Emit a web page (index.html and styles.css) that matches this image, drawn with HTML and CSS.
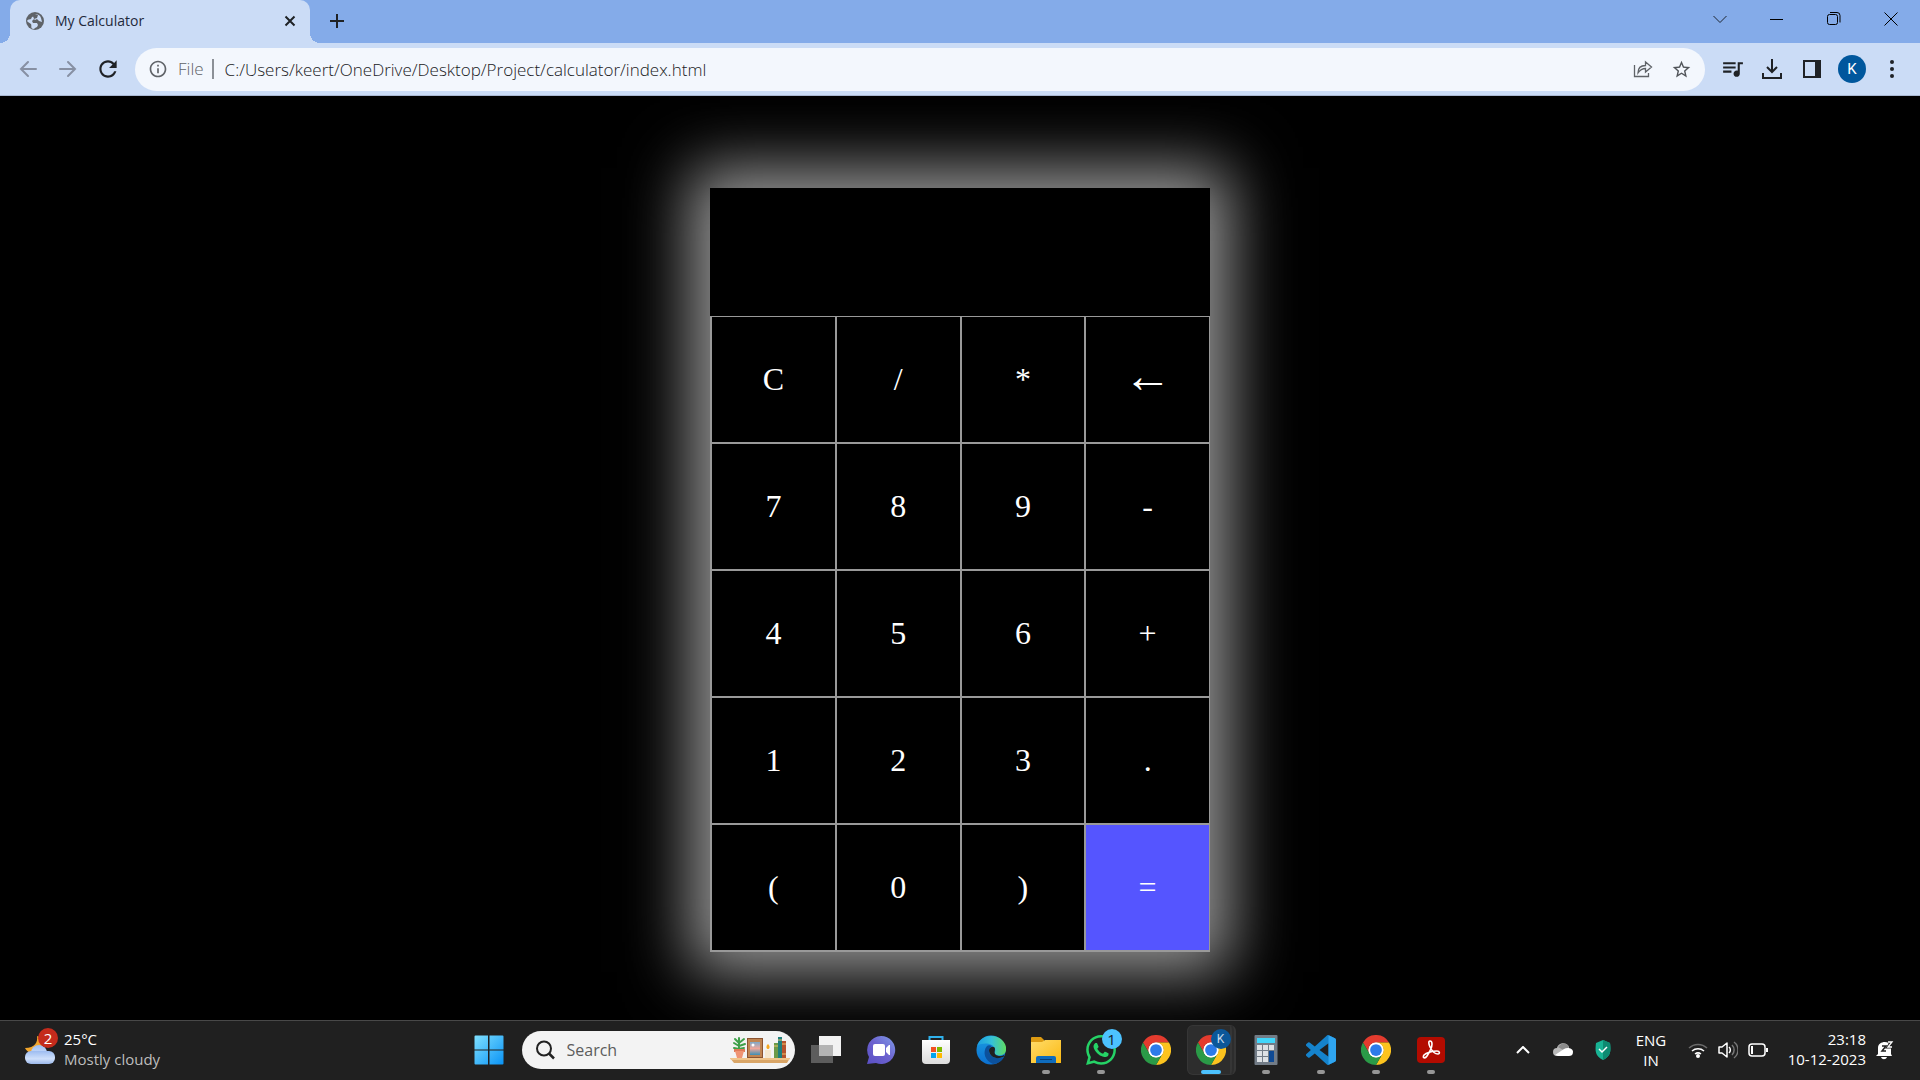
FILE: index.html
```html
<!DOCTYPE html>
<html lang="en">
<head>
<meta charset="utf-8">
<meta name="viewport" content="width=device-width, initial-scale=1">
<title>My Calculator</title>
<link rel="stylesheet" href="styles.css">
</head>
<body>
<svg class="defs" aria-hidden="true">
  <defs>
    <linearGradient id="win" x1="0" y1="0" x2="1" y2="1"><stop offset="0" stop-color="#7fe0ff"/><stop offset="1" stop-color="#0a93f5"/></linearGradient>
    <linearGradient id="chat" x1="1" y1="0" x2="0" y2="1"><stop offset="0" stop-color="#7f9be8"/><stop offset=".5" stop-color="#6c62cf"/><stop offset="1" stop-color="#5a4fc4"/></linearGradient>
    <linearGradient id="bag" x1="0" y1="0" x2="0" y2="1"><stop offset="0" stop-color="#fff"/><stop offset="1" stop-color="#dcdcdc"/></linearGradient>
    <linearGradient id="edgeTop" x1="0" y1="0" x2="1" y2="0"><stop offset="0" stop-color="#1b9de2"/><stop offset=".5" stop-color="#35c1d8"/><stop offset="1" stop-color="#5fdc62"/></linearGradient>
    <linearGradient id="edgeLeft" x1="0" y1="0" x2="0" y2="1"><stop offset="0" stop-color="#1b9de2"/><stop offset="1" stop-color="#0b6fd0"/></linearGradient>
    <linearGradient id="folder" x1="0" y1="0" x2="1" y2="1"><stop offset="0" stop-color="#ffdc6a"/><stop offset="1" stop-color="#fbb912"/></linearGradient>
    <linearGradient id="cloud" x1="0" y1="0" x2="0" y2="1"><stop offset="0" stop-color="#9dbcf0"/><stop offset=".6" stop-color="#cfe0fb"/><stop offset="1" stop-color="#9bb8ea"/></linearGradient>
    <linearGradient id="photo" x1="0" y1="0" x2="0" y2="1"><stop offset="0" stop-color="#7fa9c9"/><stop offset=".5" stop-color="#f0a79a"/><stop offset="1" stop-color="#3d8fb5"/></linearGradient>
    <symbol id="chrome" viewBox="0 0 48 48">
      <circle cx="24" cy="24" r="12.500" fill="#fff"/>
      <path fill="#e33b2e" d="M24 12H44.800A24 24 0 0 0 3.200 12L13.600 30A12 12 0 0 1 24 12Z"/>
      <path fill="#fcc31e" d="M44.800 12A24 24 0 0 1 24 48L34.400 30A12 12 0 0 0 24 12Z"/>
      <path fill="#2a9a47" d="M24 48A24 24 0 0 1 3.200 12L13.600 30A12 12 0 0 0 34.400 30Z"/>
      <circle cx="24" cy="24" r="12" fill="#fff"/>
      <circle cx="24" cy="24" r="9.400" fill="#2c7be9"/>
    </symbol>
  </defs>
</svg>

<header class="browser">
  <div class="titlebar">
    <div class="tab">
      <svg class="tab-icon" width="20" height="20" viewBox="0 0 20 20"><circle cx="10" cy="10" r="9" fill="#5f6368"/><path fill="#cbdcf6" d="M10 3c3 0 5 1 6 4l1 4-3-1-2-2-2 1-1-1-2 2 1 2h4l1 2-1 2-2 1-1 1c-4 0-2-3-3-5L3 11l-1-1c1-2 2-1 4-2l1-2 3-1z"/><path fill="#5f6368" d="M10 3l3 1-1 3-3 1-1-3z"/></svg>
      <span class="tab-title">My Calculator</span>
      <button class="tab-close" aria-label="Close tab"><svg width="12" height="12" viewBox="0 0 12 12"><path d="M1.500 1.500l9 9M10.500 1.500l-9 9" stroke="#1f2226" stroke-width="2"/></svg></button>
    </div>
    <button class="new-tab" aria-label="New tab"><svg width="16" height="16" viewBox="0 0 16 16"><path d="M8 1v14M1 8h14" stroke="#1f2226" stroke-width="2"/></svg></button>
    <div class="window-controls">
      <button aria-label="Search tabs"><svg width="14" height="14" viewBox="0 0 14 14"><path d="M.5 4l6.500 6.500L13.500 4" fill="none" stroke="#1c2430"/></svg></button>
      <button aria-label="Minimize"><svg width="14" height="14" viewBox="0 0 14 14"><path d="M0 7.500h13" stroke="#000"/></svg></button>
      <button aria-label="Restore"><svg width="14" height="14" viewBox="0 0 14 14"><rect x=".5" y="2.500" width="10" height="10" rx="2" fill="none" stroke="#000"/><path d="M3 .5h7a3 3 0 0 1 3 3v7" fill="none" stroke="#000"/></svg></button>
      <button aria-label="Close"><svg width="14" height="14" viewBox="0 0 14 14"><path d="M.5.5l13 13M13.500.5l-13 13" stroke="#000"/></svg></button>
    </div>
  </div>
  <div class="toolbar">
    <div class="tools">
      <button aria-label="Back"><svg width="18" height="18" viewBox="0 0 18 18"><path d="M17 9H2M9 2L2 9l7 7" fill="none" stroke="#8790a3" stroke-width="2" stroke-linecap="round"/></svg></button>
      <button aria-label="Forward"><svg width="18" height="18" viewBox="0 0 18 18"><path d="M1 9h15M9 2l7 7-7 7" fill="none" stroke="#8790a3" stroke-width="2" stroke-linecap="round"/></svg></button>
      <button aria-label="Reload"><svg width="26" height="26" viewBox="0 0 24 24"><path fill="#1f2226" d="M17.650 6.350C16.200 4.900 14.210 4 12 4c-4.420 0-7.990 3.580-7.990 8s3.570 8 7.990 8c3.730 0 6.840-2.550 7.730-6h-2.080c-.82 2.330-3.040 4-5.650 4-3.310 0-6-2.690-6-6s2.690-6 6-6c1.660 0 3.140.69 4.220 1.780L13 11h7V4l-2.350 2.350z"/></svg></button>
    </div>
    <div class="address">
      <svg width="20" height="20" viewBox="0 0 24 24"><path fill="#5f6368" d="M11 7h2v2h-2zm0 4h2v6h-2zm1-9C6.480 2 2 6.480 2 12s4.480 10 10 10 10-4.480 10-10S17.520 2 12 2zm0 18c-4.410 0-8-3.590-8-8s3.590-8 8-8 8 3.590 8 8-3.590 8-8 8z"/></svg>
      <label class="scheme" for="url">File</label>
      <input class="url" id="url" type="text" value="C:/Users/keert/OneDrive/Desktop/Project/calculator/index.html">
      <button aria-label="Share"><svg width="20" height="20" viewBox="0 0 20 20"><path d="M1.500 6v11.500h14V14M5 14c0-5 3-7.500 7.500-7.500V3l6 5-6 5V9.500C9 9.500 7 11 5 14z" fill="none" stroke="#5f6368" stroke-width="1.300"/></svg></button>
      <button aria-label="Bookmark this tab"><svg width="21" height="21" viewBox="0 0 24 24"><path fill="#505459" d="M22 9.240l-7.190-.62L12 2 9.190 8.630 2 9.240l5.460 4.730L5.820 21 12 17.270 18.180 21l-1.630-7.030L22 9.240zM12 15.400l-3.760 2.270 1-4.280-3.320-2.880 4.380-.38L12 6.100l1.710 4.040 4.380.38-3.320 2.880 1 4.280L12 15.400z"/></svg></button>
    </div>
    <div class="tools">
      <button aria-label="Media controls"><svg width="25" height="25" viewBox="0 0 24 24"><path fill="#1f2226" d="M15 5H3v2h12V5zm0 4H3v2h12V9zM3 15h8v-2H3v2zM17 5v8.180c-.31-.11-.65-.18-1-.18-1.660 0-3 1.340-3 3s1.340 3 3 3 3-1.340 3-3V7h3V5h-5z"/></svg></button>
      <button aria-label="Downloads"><svg width="20" height="20" viewBox="0 0 20 20"><path d="M10 0v12M5 8l5 5 5-5M1 14v5h18v-5" fill="none" stroke="#1f2226" stroke-width="2"/></svg></button>
      <button aria-label="Side panel"><svg width="18" height="18" viewBox="0 0 18 18"><rect x="1" y="1" width="16" height="16" fill="none" stroke="#1f2226" stroke-width="2"/><path d="M12 1h5v16h-5z" fill="#1f2226"/></svg></button>
      <button aria-label="Profile"><span class="avatar">K</span></button>
      <button aria-label="Menu"><svg width="4" height="18" viewBox="0 0 4 18"><g fill="#1f2226"><circle cx="2" cy="2" r="2"/><circle cx="2" cy="9" r="2"/><circle cx="2" cy="16" r="2"/></g></svg></button>
    </div>
  </div>
</header>

<main class="page">
  <form class="calculator">
    <input class="display" type="text" aria-label="Result" readonly>
    <div class="keys">
      <button type="button">C</button><button type="button">/</button><button type="button">*</button><button type="button" class="backspace" aria-label="Backspace">←</button>
      <button type="button">7</button><button type="button">8</button><button type="button">9</button><button type="button">-</button>
      <button type="button">4</button><button type="button">5</button><button type="button">6</button><button type="button">+</button>
      <button type="button">1</button><button type="button">2</button><button type="button">3</button><button type="button">.</button>
      <button type="button">(</button><button type="button">0</button><button type="button">)</button><button type="button" class="equals">=</button>
    </div>
  </form>
</main>

<footer class="taskbar">
  <button class="weather">
    <span class="weather-icon">
      <svg width="32" height="32" viewBox="0 0 32 32"><path fill="#f2a62c" d="M13 2c1 6-2 12-12 12 3 6 12 8 17 1V4z"/><g fill="url(#cloud)"><circle cx="15" cy="19" r="8"/><rect x="1" y="17" width="30" height="13" rx="6"/></g></svg>
      <span class="badge alert">2</span>
    </span>
    <span class="weather-text"><span>25°C</span><span class="muted">Mostly cloudy</span></span>
  </button>

  <div class="apps">
    <button class="app" aria-label="Start"><svg width="30" height="30" viewBox="0 0 30 30"><path fill="url(#win)" d="M1.500.5H14v14H.5v-13a1 1 0 0 1 1-1zM15.500.5h13a1 1 0 0 1 1 1v13h-14zM.5 15.500H14v14H1.500a1 1 0 0 1-1-1zM15.500 15.500h14v13a1 1 0 0 1-1 1h-13z"/></svg></button>
    <div class="search">
      <svg width="20" height="20" viewBox="0 0 20 20"><circle cx="9" cy="8.500" r="7" fill="none" stroke="#222" stroke-width="2"/><path d="M14 13.500l5 5" stroke="#222" stroke-width="2.500"/></svg>
      <input type="text" aria-label="Search" placeholder="Search">
      <svg class="shelf" width="60" height="28" viewBox="0 0 60 28">
        <path fill="#d9a566" d="M0 22h60l-3 5H4z"/><path fill="#f0c48a" d="M0 22h60l-1 2H1z"/>
        <path d="M9 14V2M9 7L5 3M9 7l5-4M9 10L4 7M9 10l6-2M9 13l-5-1M9 13l5-1" stroke="#3fa04a" stroke-width="2" stroke-linecap="round"/>
        <path fill="#e07a58" d="M4 13h11v3H4z"/><path fill="#ef9473" d="M5 15h9l-2 7H7z"/>
        <path fill="#8c5431" d="M17 2h16v20H17z"/><path fill="#c08552" d="M18 3h14v18H18z"/><path fill="url(#photo)" d="M20 6h10v13H20z"/><circle cx="23" cy="9" r="1.500" fill="#fff"/>
        <path fill="#f6e8cf" d="M35 14h6v8h-6z"/><path fill="#f6a821" d="M38 8c3 3 1 5 0 5s-3-2 0-5z"/>
        <path fill="#6c9a48" d="M44 7h4v15h-4z"/><path fill="#1f7f7c" d="M48 1h4v21h-4z"/><path fill="#b5532d" d="M52 5h4v17h-4z"/><path stroke="#e9c46a" d="M44 10h4M48 4h4M52 8h4M52 18h4"/>
      </svg>
    </div>
    <button class="app" aria-label="Task view"><svg width="30" height="28" viewBox="0 0 30 28"><path fill="#5d5d5d" d="M0 9h22v18H0z"/><path fill="#f2f2f2" d="M8 0h22v20H8z"/><path fill="#b4b4b4" d="M8 9h14v11H8z"/></svg></button>
    <button class="app" aria-label="Chat"><svg width="30" height="30" viewBox="0 0 30 30"><path fill="url(#chat)" d="M15 1a14 14 0 1 1-5 27L1 29l2-7A14 14 0 0 1 15 1z"/><rect x="7" y="9" width="12" height="12" rx="2" fill="#fff"/><path fill="#fff" d="M20 13l3-3h1v10h-1l-3-3z"/></svg></button>
    <button class="app" aria-label="Microsoft Store"><svg width="30" height="30" viewBox="0 0 30 30"><path d="M8.500 6V2h13v4" fill="none" stroke="#2fb1ec" stroke-width="2"/><path fill="url(#bag)" d="M1 5h28v20a4 4 0 0 1-4 4H5a4 4 0 0 1-4-4z"/><path fill="#f25022" d="M10 12h5v5h-5z"/><path fill="#7fba00" d="M16 12h5v5h-5z"/><path fill="#00a4ef" d="M10 18h5v5h-5z"/><path fill="#ffb900" d="M16 18h5v5h-5z"/></svg></button>
    <button class="app" aria-label="Edge"><svg width="30" height="30" viewBox="0 0 30 30"><circle cx="15" cy="15" r="14.500" fill="url(#edgeLeft)"/><path fill="url(#edgeTop)" d="M1 11C4 2 13-1 21 2c8 3 11 11 8 16-2 3-8 3-10 1-1-2 1-2 0-5-2-6-12-7-18-3z"/><path fill="#0c519c" d="M11 11c-5 6-2 15 6 18 5 0 9-3 11-7-7 3-14 0-15-5 0-3 1-5 3-6-2-1-4-1-5 0z"/><path fill="#202020" d="M13 15c1-4 6-4 6-1 0 2-1 3 0 5 2 3 8 2 9 1 0 1 0 2-1 2-6 3-14 0-14-7z"/></svg></button>
    <button class="app running" aria-label="File Explorer"><svg width="30" height="28" viewBox="0 0 30 28"><path fill="#dd9b12" d="M0 2a1 1 0 0 1 1-1h9l3 3v6H0z"/><path fill="url(#folder)" d="M0 6h11l3-2h16v23H0z"/><path fill="#0f6cbd" d="M5 27v-5a2 2 0 0 1 2-2h16a2 2 0 0 1 2 2v5z"/><path stroke="#0a3f77" d="M9 23.500h12"/></svg></button>
    <button class="app running" aria-label="WhatsApp"><svg width="30" height="30" viewBox="0 0 24 24"><path fill="#25d366" d="M17.472 14.382c-.297-.149-1.758-.867-2.030-.967-.273-.099-.471-.148-.67.15-.197.297-.767.966-.94 1.164-.173.199-.347.223-.644.075-.297-.15-1.255-.463-2.390-1.475-.883-.788-1.480-1.761-1.653-2.059-.173-.297-.018-.458.13-.606.134-.133.298-.347.446-.52.149-.174.198-.298.298-.497.099-.198.05-.371-.025-.52-.075-.149-.669-1.612-.916-2.207-.242-.579-.487-.5-.669-.51-.173-.008-.371-.01-.57-.01-.198 0-.52.074-.792.372-.272.297-1.040 1.016-1.040 2.479 0 1.462 1.065 2.875 1.213 3.074.149.198 2.096 3.200 5.077 4.487.709.306 1.262.489 1.694.625.712.227 1.360.195 1.871.118.571-.085 1.758-.719 2.006-1.413.248-.694.248-1.289.173-1.413-.074-.124-.272-.198-.57-.347m-5.421 7.403h-.004a9.870 9.870 0 01-5.031-1.378l-.361-.214-3.741.982.998-3.648-.235-.374a9.860 9.860 0 01-1.510-5.260c.001-5.450 4.436-9.884 9.888-9.884 2.640 0 5.122 1.030 6.988 2.898a9.825 9.825 0 012.893 6.994c-.003 5.450-4.437 9.884-9.885 9.884m8.413-18.297A11.815 11.815 0 0012.050 0C5.495 0 .16 5.335.157 11.892c0 2.096.547 4.142 1.588 5.945L.057 24l6.305-1.654a11.882 11.882 0 005.683 1.448h.005c6.554 0 11.890-5.335 11.893-11.893a11.821 11.821 0 00-3.480-8.413Z"/></svg><span class="badge count">1</span></button>
    <button class="app" aria-label="Chrome"><svg width="30" height="30"><use href="#chrome"/></svg></button>
    <button class="app running active" aria-label="Chrome, profile K"><svg width="30" height="30"><use href="#chrome"/></svg><span class="badge profile">K</span></button>
    <button class="app running" aria-label="Calculator"><svg width="24" height="30" viewBox="0 0 24 30"><rect width="23" height="30" x=".5" rx="1" fill="#727c87"/><path fill="#41d6fb" d="M3 3h18v5H3z"/><path fill="#dde1e5" d="M3 10h5v5H3zM9 10h5v5H9zM15 10h5v5h-5zM3 16h5v5H3zM9 16h5v5H9zM3 22h5v5H3zM9 22h5v5H9z"/><path fill="#0f4a94" d="M15 16h5v11h-5z"/></svg></button>
    <button class="app running" aria-label="Visual Studio Code"><svg width="30" height="30" viewBox="0 0 24 24"><path fill="#1583cc" d="M23.150 2.587L18.210.21a1.494 1.494 0 0 0-1.705.29l-9.460 8.630-4.120-3.128a.999.999 0 0 0-1.276.057L.327 7.261A1 1 0 0 0 .326 8.740L3.899 12 .326 15.260a1 1 0 0 0 .001 1.479L1.650 17.940a.999.999 0 0 0 1.276.057l4.120-3.128 9.460 8.630a1.492 1.492 0 0 0 1.704.29l4.942-2.377A1.500 1.500 0 0 0 24 20.060V3.939a1.500 1.500 0 0 0-.85-1.352zm-5.146 14.861L10.826 12l7.178-5.448v10.896z"/><path fill="#2fa5f0" d="M18 .2l5.150 2.387A1.500 1.500 0 0 1 24 3.939V20.060a1.500 1.500 0 0 1-.85 1.352L18 23.800z"/></svg></button>
    <button class="app running" aria-label="Chrome"><svg width="30" height="30"><use href="#chrome"/></svg></button>
    <button class="app running" aria-label="Acrobat Reader"><svg width="28" height="28" viewBox="0 0 28 28"><rect y="1" width="28" height="26" rx="4" fill="#b30b00"/><path d="M13 5c-2 0-1 4 0 6 2 4 5 7 8 7 2 0 2-3-1-3-5 0-11 2-13 4-2 3 1 4 3 1 2-3 5-9 5-12 0-2-1-3-2-3z" fill="none" stroke="#fff" stroke-width="1.600"/></svg></button>
  </div>

  <div class="tray">
    <button class="tray-item wide" aria-label="Hidden icons"><svg width="14" height="8" viewBox="0 0 14 8"><path d="M1 7l6-6 6 6" fill="none" stroke="#fff" stroke-width="2"/></svg></button>
    <button class="tray-item wide" aria-label="OneDrive"><svg width="20" height="13" viewBox="0 0 20 13"><path fill="#b9b9b9" d="M4 13a4 4 0 0 1 0-8c1-5 9-7 12-1v9z"/><path fill="#8b8b8b" d="M6 3c3-4 9-3 10 1l-4 4-7-4z"/><path fill="#fff" d="M2 12l9-6c3-2 9-1 9 3 0 3-2 4-4 4H5z"/></svg></button>
    <button class="tray-item wide" aria-label="Security"><svg width="16" height="20" viewBox="0 0 16 20"><path fill="#18b394" d="M8 0l7 3c1 8 1 13-7 17C0 16 0 11 1 3z"/><path fill="#0d8a71" d="M8 0l7 3c1 8 1 13-7 17z"/><path d="M4 9l3 3 5-5" fill="none" stroke="#fff" stroke-width="1.500"/></svg></button>
    <button class="lang"><span>ENG</span><span>IN</span></button>
    <button class="tray-item" aria-label="Wi-Fi"><svg width="20" height="16" viewBox="0 0 20 16"><g fill="none" stroke-width="1.500"><path stroke="#6b6b6b" d="M1 6a13 13 0 0 1 18 0"/><path stroke="#fff" d="M4 9a9 9 0 0 1 12 0M7 12a5 5 0 0 1 6 0"/></g><circle cx="10" cy="14" r="2" fill="#fff"/></svg></button>
    <button class="tray-item" aria-label="Volume"><svg width="20" height="18" viewBox="0 0 20 18"><path d="M1 6h3l5-4v14l-5-4H1z" fill="none" stroke="#fff" stroke-width="1.500" stroke-linejoin="round"/><path d="M11 6a4 4 0 0 1 0 6" fill="none" stroke="#fff" stroke-width="1.500"/><path d="M14 4a7 7 0 0 1 0 10M16 1a10 10 0 0 1 0 16" fill="none" stroke="#777" stroke-width="1.500"/></svg></button>
    <button class="tray-item" aria-label="Battery"><svg width="20" height="14" viewBox="0 0 20 14"><rect x="1" y="1" width="16" height="12" rx="3" fill="none" stroke="#fff" stroke-width="1.500"/><path fill="#fff" d="M3 3h2v8H3zM18 5h2v4h-2z"/></svg></button>
    <button class="clock"><span>23:18</span><span>10-12-2023</span></button>
    <button class="tray-item bell" aria-label="Notifications"><svg width="18" height="20" viewBox="0 0 18 20"><path fill="#fff" d="M2 14V8c0-7 11-8 13-2v8l1 2H0zM5 17h6c-1 3-5 3-6 0z"/><path d="M6 6h4l-4 5h4" fill="none" stroke="#202020" stroke-width="1.500"/><path d="M12 2h4l-4 5h4" fill="none" stroke="#202020" stroke-width="3"/><path d="M12 2h4l-4 5h4" fill="none" stroke="#fff" stroke-width="1.300"/></svg></button>
  </div>
</footer>
</body>
</html>
```
FILE: styles.css
```css
* {
  box-sizing: border-box;
}

body {
  display: flex;
  flex-direction: column;
  min-height: 100vh;
  margin: 0;
  background: #000;
  font-family: "Open Sans", "Noto Sans", sans-serif;
}

button,
input {
  margin: 0;
  padding: 0;
  border: 0;
  background: none;
  color: inherit;
  font: inherit;
  outline: 0;
}

button {
  display: flex;
  align-items: center;
  justify-content: center;
}

svg {
  display: block;
  flex: none;
}

.defs {
  position: absolute;
  width: 0;
  height: 0;
}

/* Browser window */

.titlebar {
  display: flex;
  height: 43px;
  padding: 0 1px 0 10px;
  background: #84abe9;
}

.tab {
  position: relative;
  display: flex;
  align-items: center;
  width: 300px;
  padding: 0 12px 2px 15px;
  border-radius: 10px 10px 0 0;
  background: #cbdcf6;
  color: #1f2a3c;
  font-size: 14px;
}

.tab::before,
.tab::after {
  content: "";
  position: absolute;
  bottom: 0;
  width: 10px;
  height: 10px;
}

.tab::before {
  right: 100%;
  background: radial-gradient(circle at 0 0, transparent 10px, #cbdcf6 10px);
}

.tab::after {
  left: 100%;
  background: radial-gradient(circle at 100% 0, transparent 10px, #cbdcf6 10px);
}

.tab-title {
  flex: 1;
  padding-left: 10px;
}

.tab-close {
  width: 16px;
  height: 16px;
}

.new-tab {
  width: 34px;
  height: 42px;
  margin-left: 10px;
}

.window-controls {
  display: flex;
  height: 37px;
  margin-left: auto;
}

.window-controls button {
  width: 57px;
}

.toolbar {
  display: flex;
  gap: 7px;
  align-items: center;
  height: 53px;
  padding: 0 8px;
  border-bottom: 1px solid #a9b8d2;
  background: #cbdcf6;
}

.tools {
  display: flex;
}

.tools button {
  width: 40px;
  height: 40px;
}

.avatar {
  width: 28px;
  border-radius: 50%;
  background: #00579d;
  color: #fff;
  font-family: Roboto, sans-serif;
  font-size: 15px;
  line-height: 28px;
}

.address {
  display: flex;
  flex: 1;
  align-items: center;
  height: 43px;
  padding: 0 4px 0 13px;
  border-radius: 22px;
  background: #f3f7fd;
  color: #202124;
  font-size: 17px;
}

.scheme {
  padding: 0 8px 0 10px;
  border-right: 2px solid #8b9097;
  color: #5f6368;
  line-height: 20px;
}

.scheme,
.url {
  font-weight: 350;
}

.url {
  flex: 1;
  min-width: 0;
  margin-left: 11px;
}

.address button {
  width: 39px;
  height: 40px;
}

/* Calculator */

.page {
  display: flex;
  flex: 1;
  align-items: center;
  justify-content: center;
  padding: 44px 20px 20px;
  background: #000;
}

.calculator {
  width: 500px;
  box-shadow: 0 0 60px 20px #999;
  color: #fff;
  font-family: "Liberation Serif", "Times New Roman", serif;
  font-size: 32px;
}

.display {
  display: block;
  width: 100%;
  height: 128px;
  padding: 0 16px;
  background: #000;
  text-align: right;
}

.keys {
  display: grid;
  grid-template-columns: repeat(4, 1fr);
  grid-auto-rows: 125px;
  gap: 2px;
  padding: 1px 1px 2px 2px;
  background: #999;
}

.keys button {
  background: #000;
}

.keys .backspace {
  padding-bottom: 8px;
  font-size: 48px;
}

.keys .equals {
  background: #55f;
}

/* Taskbar */

.taskbar {
  display: grid;
  grid-template-columns: 1fr auto 1fr;
  align-items: center;
  height: 60px;
  padding-bottom: 2px;
  border-top: 1px solid #484848;
  background: #202020;
  color: #fff;
  font-size: 15px;
  line-height: 20px;
}

.weather {
  gap: 8px;
  justify-self: start;
  padding-left: 24px;
}

.weather-icon {
  position: relative;
}

.weather-text,
.lang,
.clock {
  display: flex;
  flex-direction: column;
}

.weather-text,
.clock {
  padding-bottom: 2px;
}

.weather-text {
  align-items: flex-start;
}

.muted {
  color: #bdbdbd;
}

.badge {
  position: absolute;
  width: 20px;
  border-radius: 50%;
  line-height: 20px;
  text-align: center;
}

.alert {
  top: -6px;
  left: 14px;
  background: #c42b1c;
}

.count {
  top: 4px;
  right: 7px;
  background: #4cc2ff;
  color: #10202c;
}

.profile {
  top: 4px;
  right: 8px;
  background: #0b5799;
  color: #c5d8ea;
  font-family: Roboto, sans-serif;
  font-size: 12px;
}

.apps {
  display: flex;
  align-items: center;
}

.app {
  position: relative;
  width: 55px;
  height: 50px;
}

.running::after {
  content: "";
  position: absolute;
  bottom: 1px;
  left: calc(50% - 4px);
  width: 8px;
  height: 4px;
  border-radius: 2px;
  background: #969696;
}

.active::before {
  content: "";
  position: absolute;
  inset: 0 3px;
  z-index: -1;
  border: 1px solid #363636;
  border-right: 6px double #363636;
  border-radius: 6px;
  background: #2d2d2d;
}

.active {
  z-index: 0;
}

.active::after {
  left: calc(50% - 10px);
  width: 20px;
  background: #4cc2ff;
}

.search {
  display: flex;
  align-items: center;
  width: 273px;
  height: 38px;
  margin: 0 4px 0 5px;
  padding: 0 5px 0 13px;
  border-radius: 19px;
  background: #f3f3f3;
  color: #5c5c5c;
  font-size: 16px;
}

.search input {
  flex: 1;
  min-width: 0;
  margin-left: 12px;
}

.search input::placeholder {
  color: #5c5c5c;
  opacity: 1;
}

.tray {
  display: flex;
  align-items: center;
  justify-self: end;
  padding-right: 20px;
}

.tray-item {
  width: 30px;
  height: 40px;
}

.wide {
  width: 40px;
}

.lang {
  width: 56px;
  margin-right: 4px;
}

.clock {
  align-items: flex-end;
  width: 93px;
}

.bell {
  margin-left: 4px;
}
```
